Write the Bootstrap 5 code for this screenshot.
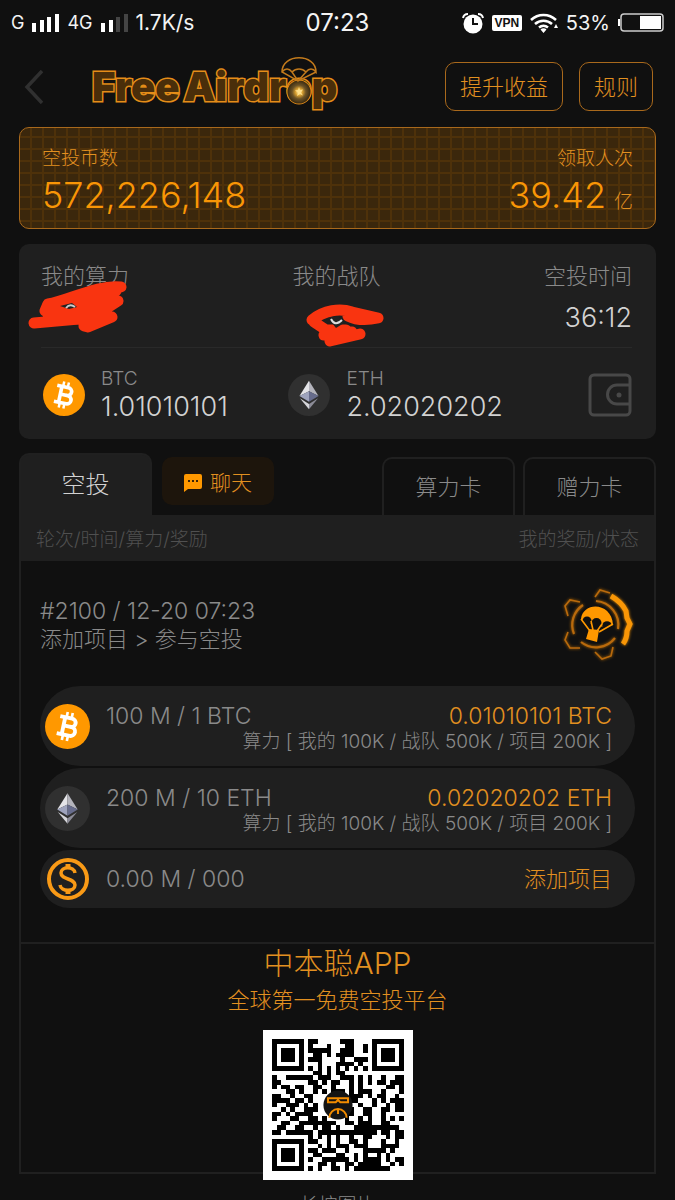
<!DOCTYPE html>
<html lang="zh-CN">
<head>
<meta charset="utf-8">
<meta name="viewport" content="width=device-width, initial-scale=1">
<title>Free Airdrop</title>
<link href="https://cdn.jsdelivr.net/npm/bootstrap@5.3.0/dist/css/bootstrap.min.css" rel="stylesheet">
<style>
:root{--ink:#101010;--panel:#1f1f1f;--line:#202020;--gold:#f99606;--gold-dim:#e29020;--grey:#8a8a8a;--light:#d2d2d2}
body{background:var(--ink);color:var(--grey);font-family:Inter,"Noto Sans CJK SC",sans-serif;font-weight:300;font-size:22px;line-height:28px}
svg{display:block;flex:none}
a,button{color:inherit;text-decoration:none;font:inherit}
.app-shell{scrollbar-width:none}
.app-shell::-webkit-scrollbar{display:none}
.gold{color:var(--gold-dim)}
.light-ink{color:var(--light)}
.t19{font-size:19px;line-height:24px}
.t21{font-size:21px;line-height:24px}
.t23{font-size:23px;line-height:28px}
.t24{font-size:24px;line-height:32px}
.t27{font-size:27px;line-height:32px}
.t36{font-size:36px;line-height:48px;color:var(--gold)}
.status-bar{height:46px;color:#f4f4f4;font-size:20px;font-weight:400;padding:0 11px}
.status-bar .clock{font-size:24px}
.status-bar .net{font-size:18px}
.status-bar .speed{font-size:21px}
.vpn-tag{background:#fff;color:#111;font:700 12px/16px "Liberation Sans",sans-serif;border-radius:2px;width:30px}
.top-bar{padding:16px 22px 16px 24px}
.brand{font:900 40px/48px Inter,sans-serif;color:#4a2e0a;-webkit-text-stroke:3px #e58d18;paint-order:stroke fill;gap:4px}
.orb-letter{position:relative;display:inline-block}
.orb-letter svg{position:absolute;left:50%;top:-7px;margin-left:-18px}
.btn-line{border:1px solid #a9691c;border-radius:10px;color:var(--gold-dim);background:transparent;height:49px;padding:0 14px}
.banner{border:1px solid #a9691c;border-radius:10px;margin:0 19px;padding:19px 22px 9px;background-color:#3b270c;
 background-image:linear-gradient(#4e310a 2px,transparent 2px),linear-gradient(90deg,#4e310a 2px,transparent 2px);background-size:12px 12px;background-position:10px 8px}
.stats{background:var(--panel);border-radius:10px;margin:15px 19px 0;padding:18px 24px 16px 22px}
.stats-top{height:86px;border-bottom:1px solid #292929}
.stats-low{padding:19px 0 0 2px}
.stat{position:relative}
.scribble{position:absolute}
.tabs-row{margin:14px 19px 0;height:62px}
.tab{width:133px;height:58px;border:2px solid var(--line);border-bottom:0;border-radius:10px 10px 0 0;background:transparent;padding:0}
.tab.current{height:62px;background:var(--panel);color:var(--light)}
.btn-chat{width:112px;height:48px;border:0;border-radius:10px;background:#1d150c;color:var(--gold-dim);padding:4px 0 0;margin-left:10px}
.panel-box{margin:0 19px;border:2px solid var(--line);border-top:0}
.panel-head{background:var(--panel);color:#505050;height:46px;padding:3px 15px 0}
.round{padding:27px 20px 24px 19px}
.round svg{overflow:visible}
.pill{background:var(--panel);border-radius:40px;margin:0 19px 2px;height:80px;padding:0 23px 0 5px}
.pill-low{height:58px;margin-bottom:34px}
.promo{border-top:2px solid var(--line)}
.promo h2{font-size:30px;line-height:38px;font-weight:300;color:var(--gold-dim)}
.qr{background:#fff;width:150px;height:150px;padding:9px;margin-bottom:-8px;position:relative}
</style>
</head>
<body>
<svg width="0" height="0" class="position-absolute" aria-hidden="true">
 <symbol id="btc" viewBox="0 0 44 44"><circle cx="22" cy="22" r="22" fill="#ff9800"/><g transform="rotate(12 22 22)" fill="none" stroke="#fff" stroke-width="3.800"><path d="M18 13.500v17M13 13.500h12a4.100 4.100 0 0 1 0 8.300H18M24 21.800h2a4.300 4.300 0 0 1 0 8.700H13"/><path stroke-width="2.600" d="M19.300 8v5M24.300 8v5M19.300 31v5M24.300 31v5"/></g></symbol>
 <symbol id="eth" viewBox="0 0 44 44"><circle cx="22" cy="22" r="22" fill="#303030"/><path fill="#e4e4e8" d="M22 7 12 23l10-5z"/><path fill="#b4b4bc" d="m22 7 10 16-10-5z"/><path fill="#9ea3bd" d="m12 23 10-5v11z"/><path fill="#676c8c" d="m32 23-10-5v11z"/><path fill="#d5d5da" d="m12.500 25.500 9.500 6V37z"/><path fill="#8c8c98" d="m31.500 25.500-9.500 6V37z"/></symbol>
</svg>
<div class="app-shell vh-100 overflow-auto">
 <div class="status-bar d-flex align-items-center justify-content-between position-relative">
  <div class="d-flex align-items-center gap-2">
   <span class="net">G</span>
   <svg width="27" height="20"><path fill="#fff" d="M0 10h4v9H0zM8 7h4v12H8zM15 4h4v15h-4zM23 1h4v18h-4z"/></svg>
   <span class="net">4G</span>
   <svg width="27" height="20"><path fill="#fff" d="M0 10h4v9H0zM8 7h4v12H8z"/><path fill="#444" d="M15 4h4v15h-4zM23 1h4v18h-4z"/></svg>
   <span class="speed">1.7K/s</span>
  </div>
  <span class="clock position-absolute start-50 translate-middle-x">07:23</span>
  <div class="d-flex align-items-center gap-2">
   <svg width="22" height="22" viewBox="0 0 22 22"><circle cx="11" cy="12" r="9.500" fill="#fff"/><path d="M1 6a5 5 0 0 1 5-4M21 6a5 5 0 0 0-5-4" stroke="#fff" stroke-width="2" fill="none"/><path d="M11 6v6h5" stroke="#111" stroke-width="2" fill="none"/></svg>
   <span class="vpn-tag text-center">VPN</span>
   <svg width="28" height="20" viewBox="0 0 28 20"><g fill="none" stroke="#fff" stroke-width="2.500"><path d="M1 7a18 18 0 0 1 25 0M5 11a12.500 12.500 0 0 1 17 0M9 14.500a7 7 0 0 1 9 0"/></g><path fill="#fff" d="m10.500 16.500 3 3.500 3-3.500a4 4 0 0 0-6 0zM24 15l2-4 2 4z"/></svg>
   <span>53%</span>
   <svg width="46" height="20" viewBox="0 0 46 20"><rect x="3" y="1" width="42" height="17" rx="3" fill="none" stroke="#ccc" stroke-width="1.500"/><path fill="#fff" d="M22 3h21v13H22zM0 6h2v7H0z"/></svg>
  </div>
 </div>

 <header class="top-bar d-flex align-items-center">
  <a href="#" aria-label="返回"><svg width="20" height="34" viewBox="0 0 20 34"><path d="M18 1 3 17l15 16" fill="none" stroke="#303030" stroke-width="3.500"/></svg></a>
  <h1 class="brand d-flex mb-0 ms-5 text-nowrap flex-grow-1"><span>Free</span> <span>Airdr<span class="orb-letter">o<svg width="36" height="50" viewBox="0 0 36 50"><defs><radialGradient id="glow"><stop offset="0" stop-color="#fff0b0"/><stop offset=".3" stop-color="#d9a030"/><stop offset=".6" stop-color="#6b5226"/><stop offset="1" stop-color="#3a2a10"/></radialGradient></defs><circle cx="18" cy="36" r="11.500" fill="url(#glow)" stroke="#e58d18" stroke-width="2"/><path d="m18 31 1 3 3-.500-2 3 2 3-3-1.500-3 2 1-3.500-3-2 3-.500z" fill="#ffe08a"/><path d="M1 16C1-3 35-3 35 16c-3-4-7-4-10 0-4-4-10-4-14 0-3-4-7-4-10 0l16 9 18-9M11 16l6 9 8-9" fill="none" stroke="#c27a1c" stroke-width="1.500"/></svg></span>p</span></h1>
  <button class="btn-line me-3" type="button">提升收益</button>
  <button class="btn-line" type="button">规则</button>
 </header>

 <main>
  <section class="banner d-flex justify-content-between">
   <div><div class="t19 gold">空投币数</div><div class="t36">572,226,148</div></div>
   <div class="text-end"><div class="t19 gold">领取人次</div><div class="t36">39.42<span class="t19 gold ms-2">亿</span></div></div>
  </section>

  <section class="stats">
   <div class="stats-top d-flex justify-content-between">
    <div class="stat">我的算力
     <svg class="scribble" style="left:-13px;top:17px" width="104" height="56" viewBox="0 0 104 56"><g fill="none" stroke="#f93410" stroke-width="11" stroke-linecap="round" stroke-linejoin="round"><path d="M93 8C70 5 40 22 20 25L17 32 90 22 70 35 20 36M6 44q40-4 78-6L60 48l-4-1 22-7M30 38l38-7M50 26l38-14"/></g><path d="m32 27 12-3 5 4-8 2z" fill="#222"/><path d="M38 29q4-5 9-1" stroke="#ccc" stroke-width="2" fill="none"/></svg></div>
    <div class="stat">我的战队
     <svg class="scribble" style="left:14px;top:42px" width="80" height="46" viewBox="0 0 80 46"><g fill="none" stroke="#f93410" stroke-width="11" stroke-linecap="round" stroke-linejoin="round"><path d="M6 16C18 6 34 4 46 8L72 14q-18 4-30-2M8 18l12 8 20 0-22 5 28-3-22 9 30-7"/></g><path d="M22 14l10-2 6 7-8 5z" fill="#222"/><path d="M25 15q4 8 11 1" stroke="#ddd" stroke-width="2" fill="none"/></svg></div>
    <div class="text-end">空投时间<div class="t27 light-ink mt-2 pt-1">36:12</div></div>
   </div>
   <div class="stats-low row g-0 align-items-center">
    <div class="col-5 d-flex align-items-center"><svg class="me-3" width="42" height="42"><use href="#btc"/></svg><div><div class="t19">BTC</div><div class="t27 light-ink">1.01010101</div></div></div>
    <div class="col d-flex align-items-center"><svg class="me-3" width="42" height="42"><use href="#eth"/></svg><div><div class="t19">ETH</div><div class="t27 light-ink">2.02020202</div></div></div>
    <a class="col-auto" href="#" aria-label="钱包"><svg width="44" height="44" viewBox="0 0 44 44" fill="none" stroke="#484848" stroke-width="3"><rect x="2" y="2" width="40" height="40" rx="4"/><path d="M42 12H29a9.500 9.500 0 0 0 0 19h13"/><circle cx="31" cy="22" r="2.500" fill="#484848" stroke="none"/></svg></a>
   </div>
  </section>

  <div class="tabs-row d-flex align-items-end">
   <button class="tab current t24" type="button">空投</button>
   <button class="btn-chat t21 d-flex align-items-center justify-content-center gap-2 align-self-start mt-1" type="button"><svg width="18" height="18" viewBox="0 0 18 18"><path fill="#ff9800" d="M2 0h14a2 2 0 0 1 2 2v11a2 2 0 0 1-2 2H4l-4 3V2a2 2 0 0 1 2-2z"/><path fill="#3a2408" d="M4 6h2v2H4zM8 6h2v2H8zM12 6h2v2h-2z"/></svg>聊天</button>
   <button class="tab ms-auto me-2" type="button">算力卡</button>
   <button class="tab" type="button">赠力卡</button>
  </div>

  <section class="panel-box">
   <div class="panel-head t19 d-flex align-items-center justify-content-between"><span>轮次/时间/算力/奖励</span><span>我的奖励/状态</span></div>
   <div class="round d-flex align-items-center justify-content-between">
    <div><div class="t23">#2100 / 12-20 07:23</div><div>添加项目 &gt; 参与空投</div></div>
    <svg width="72" height="74" viewBox="0 0 72 74"><defs><filter id="halo" x="-20%" y="-20%" width="140%" height="140%"><feGaussianBlur stdDeviation="1.600"/></filter>
     <g id="gear" fill="none" stroke="#b96a0c" stroke-width="1.600"><path d="M6 28 3 18l5-6 10 2M33 9l5-7 10 3M6 44l-3 8 5 8h10M33 64l7 7 9-3 2-9"/><path stroke-width="2.200" d="M21 17a24 24 0 0 0-9 29M34 13a24 24 0 0 1 22 28M53 50a24 24 0 0 1-34 4"/><path stroke="#f99606" stroke-width="5" d="M49 8c7 4 12 9 15 15l1 7 3 6-3 7c0 5-1 9-4 13"/></g></defs>
     <use href="#gear" filter="url(#halo)"/><use href="#gear"/>
     <path fill="#ff9800" d="M19 31C21 13 50 14 51 37l-7 3-9-3-10-2zM27 41l10 1-2 12-11-3z"/><g fill="#101010"><circle cx="25" cy="33" r="4.500"/><circle cx="34.500" cy="35" r="5"/><circle cx="45" cy="38" r="4.800"/></g><path d="m19 31 9 12M29 33l2 9M40 36l-5 7M51 36 37 44" stroke="#ff9800" stroke-width="1.600" fill="none"/></svg>
   </div>
   <div class="pill d-flex align-items-center"><svg width="45" height="45"><use href="#btc"/></svg><div class="flex-grow-1 ms-3 pt-1"><div class="t23 d-flex justify-content-between"><span>100 M / 1 BTC</span><span class="gold">0.01010101 BTC</span></div><div class="t19 text-end">算力 [ 我的 100K / 战队 500K / 项目 200K ]</div></div></div>
   <div class="pill d-flex align-items-center"><svg width="45" height="45"><use href="#eth"/></svg><div class="flex-grow-1 ms-3 pt-1"><div class="t23 d-flex justify-content-between"><span>200 M / 10 ETH</span><span class="gold">0.02020202 ETH</span></div><div class="t19 text-end">算力 [ 我的 100K / 战队 500K / 项目 200K ]</div></div></div>
   <div class="pill pill-low d-flex align-items-center"><svg width="45" height="45" viewBox="0 0 45 45" fill="none" stroke="#f99a16"><circle cx="23" cy="22" r="19" stroke-width="4"/><path stroke-width="3.500" d="M30 16c-1-7-14-7-14 0s14 5 14 12-14 7-15 0"/><path stroke-width="5" d="M23 7v5M23 32v5"/></svg><span class="t23 ms-3">0.00 M / 000</span><a class="ms-auto gold" href="#">添加项目</a></div>

   <div class="promo d-flex flex-column align-items-center">
    <h2 class="mb-0">中本聪APP</h2>
    <div class="gold mt-1 mb-3">全球第一免费空投平台</div>
    <div class="qr"><svg id="qr" width="132" height="132" viewBox="0 0 29 29" shape-rendering="crispEdges" role="img" aria-label="二维码"><path id="modules"/><g shape-rendering="geometricPrecision"><circle cx="14.500" cy="14.500" r="3.200" fill="#141414"/><path d="M12.300 13h4.400v.900h-1.700l-.500-.500-.500.500h-1.700zM12.600 17.300a1.900 1.900 0 0 1 3.800 0M14.500 15.200v1.300" fill="none" stroke="#f28c00" stroke-width=".45"/></g></svg></div>
   </div>
  </section>
  <p class="t19 text-center mt-3 pt-1 mb-4">长按图片</p>
 </main>
</div>
<script>
// 29 × 29 QR modules, one string per row
const rows = [
"11111110110000011100001111111",
"10000010100010001100101000001",
"10111010111110011100101011101",
"10111010011010111100001011101",
"10111010111000010011101011101",
"10000010001000111101001000001",
"11111110101010101010101111111",
"00000000011010110000000000000",
"10011111101110011101010010011",
"11000000110101100101010110111",
"10110110011001000101000001101",
"00011010010101110101110010001",
"11001001100001000111010110010",
"11110110100000001110001010111",
"10011101010000001001001001011",
"00101001110000010100110011011",
"11010111100000001100110010000",
"10001100110100001001010010101",
"00110011111111001101110011000",
"01100110010110100011111111110",
"11011111101111111111111011011",
"00000000101010100100110001011",
"11111110110010100110100010010",
"10000010001010111011100011110",
"10111010110111001000111110100",
"10111010011000110010100101000",
"10111010100111111010111101011",
"10000010001101001101111100101",
"11111110101001101011111111000"];
document.getElementById("modules").setAttribute("d",
 rows.flatMap((r, y) => [...r].map((c, x) => c === "1" ? `M${x} ${y}h1v1h-1z` : "")).join(""));
</script>
<script src="https://cdn.jsdelivr.net/npm/bootstrap@5.3.0/dist/js/bootstrap.bundle.min.js"></script>
</body>
</html>
